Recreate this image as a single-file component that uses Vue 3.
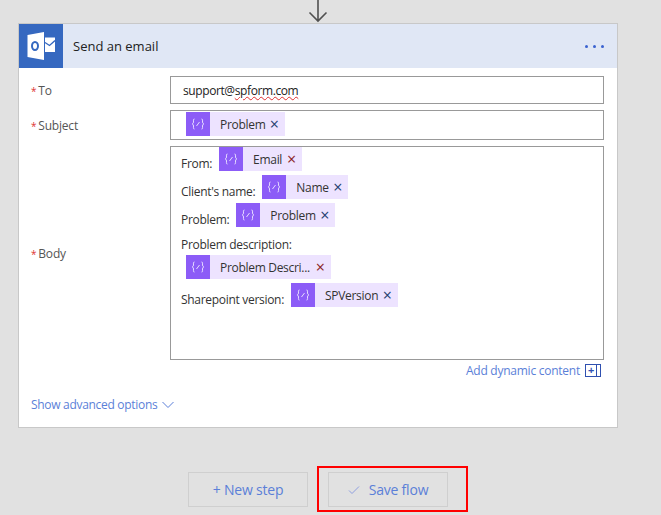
<template>
  <div class="page">
    <svg class="arrow" width="661" height="23" viewBox="0 0 661 23">
      <path d="M318 0V21M309.500 12.500L318 21L326.500 12.500" fill="none" stroke="#505050" stroke-width="1.600" />
    </svg>

    <section class="card">
      <header class="card-head">
        <div class="logo">
          <svg width="28" height="28" viewBox="0 0 28 28">
            <path d="M.5 3L17 0V28L.5 25Z" fill="#fff" />
            <path d="M18 5.500H28V20H18Z" fill="#fff" />
            <path d="M18 10.500L22.500 13.500L28 8.500" fill="none" stroke="#3568c0" stroke-width="1.300" />
            <ellipse cx="8" cy="14" rx="3" ry="4" fill="none" stroke="#3568c0" stroke-width="2" />
          </svg>
        </div>
        <span class="card-title">Send an email</span>
        <span class="dots"><i></i><i></i><i></i></span>
      </header>

      <div class="form">
        <div class="row">
          <label class="label"><b>*</b>To</label>
          <div class="field to-field">
            <span>support@<u>spform.com</u></span>
          </div>
        </div>

        <div class="row">
          <label class="label"><b>*</b>Subject</label>
          <div class="field subject-field">
            <span class="chip">
              <span class="chip-icon"><svg width="14" height="12" viewBox="0 0 14 12"><path d="M3.500 1C2 1 2.500 2.500 2.500 4S1 6 1 6s1.500 0 1.500 2S2 11 3.500 11M10.500 1C12 1 11.500 2.500 11.500 4S13 6 13 6s-1.500 0-1.500 2 .5 3-1 3M5.500 8L8.500 4" fill="none" stroke="#e6dcff" stroke-width="1" /></svg></span>
              <span class="chip-text">Problem</span>
              <span class="chip-x">×</span>
            </span>
          </div>
        </div>

        <div class="row body-row">
          <label class="label"><b>*</b>Body</label>
          <div class="field body-field">
            <div v-for="line in lines" :key="line.label" class="line" :class="line.cls">
              <span v-if="line.label" class="line-label">{{ line.label }}</span>
              <span v-if="line.chip" class="chip" :style="{ width: line.width + 'px' }">
                <span class="chip-icon"><svg width="14" height="12" viewBox="0 0 14 12"><path d="M3.500 1C2 1 2.500 2.500 2.500 4S1 6 1 6s1.500 0 1.500 2S2 11 3.500 11M10.500 1C12 1 11.500 2.500 11.500 4S13 6 13 6s-1.500 0-1.500 2 .5 3-1 3M5.500 8L8.500 4" fill="none" stroke="#e6dcff" stroke-width="1" /></svg></span>
                <span class="chip-text">{{ line.chip }}</span>
                <span class="chip-x" :class="{ red: line.red }">×</span>
              </span>
            </div>
          </div>
        </div>

        <div class="dynamic">
          <span>Add dynamic content</span>
          <span class="plus-box"><span class="plus">+</span></span>
        </div>

        <div class="advanced">
          <span>Show advanced options</span>
          <svg width="12" height="8" viewBox="0 0 12 8"><path d="M.5 1L6 6.500L11.500 1" fill="none" stroke="#5b7fd8" /></svg>
        </div>
      </div>
    </section>

    <div class="actions">
      <button class="btn">+ New step</button>
      <button class="btn save">
        <svg width="12" height="10" viewBox="0 0 12 10"><path d="M1 5.500L4 8.500L11 1.500" fill="none" stroke="#8f9fe0" /></svg>
        <span>Save flow</span>
        <span class="highlight"></span>
      </button>
    </div>
  </div>
</template>

<script setup>
const lines = [
  { label: 'From:', chip: 'Email', width: 83, cls: 'from', red: true },
  { label: "Client's name:", chip: 'Name', width: 86, cls: 'client' },
  { label: 'Problem:', chip: 'Problem', width: 99, cls: 'problem' },
  { label: 'Problem description:', cls: 'desc' },
  { label: '', chip: 'Problem Descri...', width: 145, cls: 'indent', red: true },
  { label: 'Sharepoint version:', chip: 'SPVersion', width: 107, cls: 'version' }
]
</script>

<style>
html,
body {
  margin: 0;
  background: #e1e1e1;
}
</style>

<style scoped>
.page {
  width: 661px;
  height: 515px;
  overflow: hidden;
  background: #e1e1e1;
  font-family: "Open Sans", "Noto Sans", sans-serif;
  font-size: 12px;
  color: #333;
}

.arrow {
  display: block;
}

.card {
  box-sizing: border-box;
  width: 600px;
  height: 405px;
  margin-left: 18px;
  background: #fff;
  border: 1px solid #c8c8c8;
}

.card-head {
  display: flex;
  align-items: center;
  height: 44px;
  background: #e0e7f5;
}

.logo {
  display: flex;
  align-items: center;
  justify-content: center;
  width: 44px;
  height: 44px;
  background: #3568c0;
}

.card-title {
  margin-left: 10px;
  font-size: 13px;
  color: #222;
}

.dots {
  display: flex;
  gap: 5px;
  margin-left: auto;
  margin-right: 13px;
}

.dots i {
  width: 3px;
  height: 3px;
  border-radius: 50%;
  background: #3a62d0;
}

.form {
  padding: 8px 13px 0 12px;
}

.row {
  display: flex;
  align-items: center;
  margin-bottom: 6px;
}

.label {
  width: 139px;
  flex: none;
  letter-spacing: -0.2px;
  color: #555;
}

.label b {
  margin-right: 2px;
  font-size: 10px;
  font-weight: 400;
  color: #d33;
}

.field {
  box-sizing: border-box;
  flex: 1;
  border: 1px solid #999;
}

.to-field {
  height: 28px;
  padding: 5px 12px;
  letter-spacing: -0.4px;
  color: #222;
}

.to-field u {
  text-decoration: underline wavy #e03030 1px;
}

.subject-field {
  height: 30px;
  padding: 1px 15px;
}

.subject-field .chip {
  width: 99px;
}

.body-field {
  height: 214px;
  padding: 0 10px;
}

.line {
  display: flex;
  align-items: flex-end;
  gap: 7px;
  height: 24px;
  margin-bottom: 4px;
}

.line-label {
  margin-bottom: -1px;
  letter-spacing: -0.3px;
  color: #333;
}

.desc {
  height: 22px;
  margin-top: 5px;
  margin-bottom: 1px;
}

.desc .line-label {
  margin-bottom: 0;
  padding-bottom: 1px;
}

.indent {
  padding-left: 5px;
}

.chip {
  display: inline-flex;
  align-items: center;
  height: 24px;
  background: #ede3ff;
}

.chip-icon {
  display: flex;
  align-items: center;
  justify-content: center;
  flex: none;
  width: 24px;
  height: 24px;
  background: #8c5cf7;
}

.chip-text {
  flex: 1;
  margin-left: 10px;
  white-space: nowrap;
  letter-spacing: -0.3px;
  color: #333;
}

.chip-x {
  margin-right: 6px;
  font-size: 16px;
  line-height: 1;
  color: #1f3f70;
}

.chip-x.red {
  color: #8a1f1f;
}

.dynamic {
  display: flex;
  justify-content: flex-end;
  align-items: center;
  gap: 5px;
  margin-top: -4px;
  padding-right: 3px;
  color: #5b7fd8;
  letter-spacing: -0.25px;
}

.plus-box {
  display: flex;
  box-sizing: border-box;
  width: 16px;
  height: 13px;
  border: 1px solid #2f50b0;
  color: #2f50b0;
}

.plus {
  box-sizing: border-box;
  width: 11px;
  border-right: 1px solid #2f50b0;
  line-height: 10px;
  text-align: center;
  font-size: 11px;
  font-weight: 700;
}

.advanced {
  display: flex;
  align-items: center;
  gap: 5px;
  margin-top: 17px;
  color: #5b7fd8;
  letter-spacing: -0.3px;
}

.actions {
  display: flex;
  gap: 20px;
  margin: 44px 0 0 188px;
}

.btn {
  position: relative;
  display: flex;
  align-items: center;
  justify-content: center;
  gap: 9px;
  box-sizing: border-box;
  width: 120px;
  height: 35px;
  padding: 0;
  background: transparent;
  border: 1px solid #cfcfcf;
  font-family: inherit;
  font-size: 14px;
  letter-spacing: -0.2px;
  color: #5b7fd8;
}

.highlight {
  position: absolute;
  left: -12px;
  top: -7px;
  width: 151px;
  height: 46px;
  box-sizing: border-box;
  border: 2px solid #f00;
}
</style>
